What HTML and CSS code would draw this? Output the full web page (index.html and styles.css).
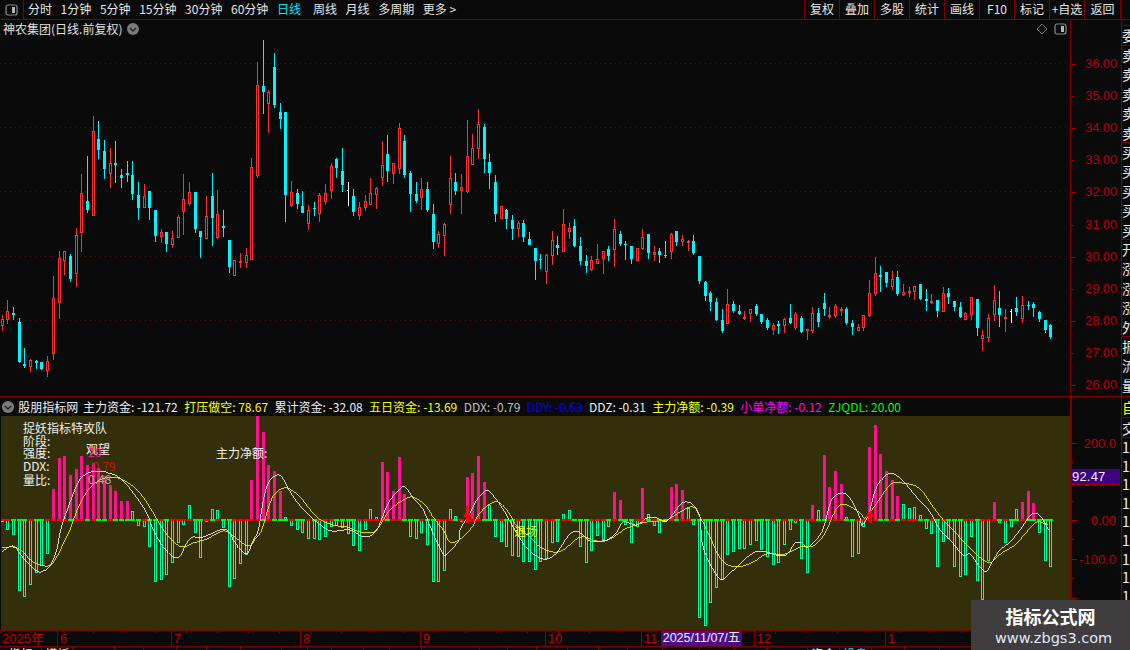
FILE: index.html
```html
<!DOCTYPE html>
<html lang="zh">
<head>
<meta charset="utf-8">
<title>神农集团 日线</title>
<link rel="stylesheet" href="styles.css">
</head>
<body>
<div class="app">
  <header class="toolbar">
    <div class="panel-btn">
      <svg class="panel-icon" viewBox="0 0 13 12"><rect x="1" y="1" width="11" height="10" rx="2" class="pi-frame"/><rect x="7" y="3" width="3" height="6" class="pi-fill"/></svg>
    </div>
    <nav class="periods">
      <span>分时</span><span>1分钟</span><span>5分钟</span><span>15分钟</span><span>30分钟</span><span>60分钟</span>
      <span class="active">日线</span><span class="after-active">周线</span><span>月线</span><span>多周期</span><span>更多 &gt;</span>
    </nav>
    <div class="tools">
      <span>复权</span><span>叠加</span><span>多股</span><span>统计</span><span>画线</span><span>F10</span><span>标记</span><span>+自选</span><span>返回</span>
    </div>
  </header>

  <section class="upper">
    <div class="chart">
      <svg id="price" class="plot" viewBox="0 20 1070 376"></svg>
      <div class="title">神农集团(日线.前复权)
        <svg class="chev" viewBox="0 0 12 12"><circle cx="6" cy="6" r="6" class="chev-bg"/><path d="M3 5l3 3 3-3" class="chev-mark"/></svg>
      </div>
      <div class="chart-icons">
        <svg class="diamond" viewBox="0 0 12 12"><path d="M6 1l5 5-5 5-5-5z"/></svg>
        <svg class="panel-icon" viewBox="0 0 13 12"><rect x="1" y="1" width="11" height="10" rx="2" class="pi-frame"/><rect x="7" y="3" width="3" height="6" class="pi-fill"/></svg>
      </div>
    </div>
    <div class="axis price-axis">
      <div class="tick long">36.00</div><div class="tick">35.00</div><div class="tick long">34.00</div>
      <div class="tick">33.00</div><div class="tick long">32.00</div><div class="tick">31.00</div>
      <div class="tick long">30.00</div><div class="tick">29.00</div><div class="tick long">28.00</div>
      <div class="tick">27.00</div><div class="tick long">26.00</div>
    </div>
    <aside class="side">
      <div class="group g-one"><div>委</div></div>
      <div class="group"><div>卖</div><div>卖</div><div>卖</div><div>卖</div><div>卖</div></div>
      <div class="group"><div>买</div><div>买</div><div>买</div><div>买</div><div>买</div></div>
      <div class="group"><div>开</div><div>涨</div><div>涨</div><div>涨</div><div>外</div></div>
      <div class="group g-last"><div>振</div><div>流</div><div>量</div></div>
    </aside>
  </section>

  <section class="lower">
    <div class="indicator">
      <div class="legend">
        <svg class="chev" viewBox="0 0 12 12"><circle cx="6" cy="6" r="6" class="chev-bg"/><path d="M3 5l3 3 3-3" class="chev-mark"/></svg>
        <span class="lg-name">股朋指标网</span>
        <span>主力资金: -121.72</span>
        <span class="yellow">打压做空: 78.67</span>
        <span>累计资金: -32.08</span>
        <span class="yellow">五日资金: -13.69</span>
        <span class="grey">DDX: -0.79</span>
        <span class="blue">DDY: -0.63</span>
        <span>DDZ: -0.31</span>
        <span class="yellow">主力净额: -0.39</span>
        <span class="magenta">小单净额: -0.12</span>
        <span class="green">ZJQDL: 20.00</span>
      </div>
      <div class="ind-plot">
        <svg id="flow" class="plot" viewBox="1 416 1069 214"></svg>
        <div class="notes">
          <div>捉妖指标特攻队</div>
          <div class="n-row">阶段:</div>
          <div class="n-row">强度:</div>
          <div class="n-row n-ddx">DDX:</div>
          <div class="n-row n-lb">量比:</div>
        </div>
        <span class="note n-watch">观望</span>
        <span class="note n-20">20</span>
        <span class="note n-m079">-0.79</span>
        <span class="note n-048">0.48</span>
        <span class="note n-net">主力净额:</span>
        <span class="note n-exit">退场</span>
      </div>
    </div>
    <div class="axis flow-axis">
      <div class="ftick long">200.0</div><div class="ftick"></div><div class="ftick long">100.0</div><div class="ftick"></div>
      <div class="ftick long">0.00</div><div class="ftick"></div><div class="ftick long">-100.0</div><div class="ftick"></div>
      <div class="ftick long"></div>
    </div>
    <aside class="side side-low">
      <div class="low-head yellow">自</div>
      <div class="low-head">交</div>
      <div class="low-nums"><div>1</div><div>1</div><div>1</div><div>1</div><div>1</div><div>1</div><div>1</div><div>1</div><div>1</div><div>1</div></div>
    </aside>
    <div class="value-tag">92.47</div>
  </section>

  <div id="dates" class="dates"></div>
  <div id="tabs" class="tabs"></div>

  <div class="date-tag">2025/11/07/五</div>
  <div class="watermark">
    <div class="wm-title">指标公式网</div>
    <div class="wm-url">www.zbgs3.com</div>
  </div>
</div>
<script src="chart.js"></script>
</body>
</html>
```

FILE: styles.css
```css
* { box-sizing: border-box; }
html, body { margin: 0; padding: 0; background: #0a0a0a; }
body { font-family: "Noto Sans CJK SC", "Liberation Sans", sans-serif; font-size: 12px; color: #e6e6e6; }

.app { position: relative; width: 1130px; height: 650px; overflow: hidden; display: flex; flex-direction: column; background: #0a0a0a; }

.toolbar { height: 20px; flex: none; display: flex; border-bottom: 1px solid #800000; line-height: 18px; }
.panel-btn { width: 24px; border-right: 1px solid #800000; display: flex; align-items: center; justify-content: center; }
.panel-icon { width: 13px; height: 12px; display: block; }
.pi-frame { fill: none; stroke: #8a8a8a; stroke-width: 1.2; }
.pi-fill { fill: #b5b5b5; }
.periods { display: flex; gap: 8.6px; padding-left: 4px; white-space: nowrap; }
.periods .active { color: #00e6ff; }
.periods .after-active { margin-left: 3.4px; }
.tools { margin-left: auto; display: flex; margin-right: 9px; }
.tools span { width: 35px; border-left: 1px solid #800000; text-align: center; white-space: nowrap; }
.tools span:last-child { width: 37px; border-right: 1px solid #800000; }

.upper { height: 377px; flex: none; display: flex; border-bottom: 1px solid #800000; }
.chart { position: relative; width: 1070px; flex: none; }
.plot { display: block; width: 100%; height: 100%; }
.title { position: absolute; left: 3px; top: 0; line-height: 18px; color: #e0e0e0; display: flex; align-items: center; gap: 5px; white-space: nowrap; }
.chev { width: 12px; height: 12px; flex: none; display: block; }
.chev-bg { fill: #7a7a7a; }
.chev-mark { fill: none; stroke: #222; stroke-width: 1.4; }
.chart-icons { position: absolute; right: 3px; top: 3px; display: flex; align-items: center; gap: 6px; }
.diamond { width: 12px; height: 12px; display: block; }
.diamond path { fill: none; stroke: #6e6e6e; }

.axis { width: 51px; flex: none; border-left: 1px solid #800000; color: #b80000; font-family: "Liberation Sans", sans-serif; }
.price-axis { padding-top: 27.6px; }
.tick { position: relative; height: 32.2px; line-height: 32.2px; padding-left: 14px; font-size: 13px; letter-spacing: -0.1px; }
.tick::before { content: ""; position: absolute; left: 0; top: 16px; width: 2px; height: 1px; background: #a00000; }
.tick.long::before { width: 5px; }

.side { flex: 1; min-width: 0; border-left: 1px solid #800000; overflow: hidden; padding-top: 5px; font-size: 14px; line-height: 19.4px; color: #e6e6e6; }
.group { border-top: 1px solid #800000; height: 97px; white-space: nowrap; }
.g-one { height: 20px; }
.g-last { height: 60px; }

.lower { position: relative; height: 233px; flex: none; display: flex; }
.indicator { width: 1070px; flex: none; display: flex; flex-direction: column; }
.legend { height: 19px; flex: none; display: flex; align-items: center; padding-left: 2px; gap: 6.4px; white-space: nowrap; line-height: 19px; color: #f0f0f0; }
.lg-name { margin-left: -2.2px; margin-right: -1.7px; }
.yellow { color: #ffff00; }
.grey { color: #c0c0c0; }
.blue { color: #0000ff; }
.magenta { color: #ff00ff; }
.green { color: #00ff00; }
.ind-plot { position: relative; height: 214px; flex: none; background: #322f0a; border-left: 1px solid #0a0a0a; }
.notes { position: absolute; left: 22px; top: 5px; color: #f0f0f0; line-height: 14px; }
.n-row { height: 12px; line-height: 12px; }
.n-ddx { height: 14px; margin-top: 1px; }
.n-lb { margin-top: 0; }
.note { position: absolute; white-space: nowrap; line-height: 14px; }
.n-watch { left: 85px; top: 26px; color: #f0f0f0; }
.n-20 { left: 87px; top: 29px; color: #ff1493; }
.n-m079 { left: 87px; top: 43px; color: #d01010; }
.n-048 { left: 87px; top: 56px; color: #aaaaaa; }
.n-net { left: 215px; top: 30px; color: #f0f0f0; }
.n-exit { left: 513px; top: 108px; color: #ffff00; }

.flow-axis { padding-top: 36.5px; border-left-width: 2px; }
.ftick { position: relative; height: 19.4px; line-height: 19.4px; padding-right: 5px; text-align: right; font-size: 13px; }
.ftick::before { content: ""; position: absolute; left: 0; top: 9px; width: 2px; height: 1px; background: #a00000; }
.ftick.long::before { width: 5px; }
.side-low { padding-top: 0; }
.low-head { border-bottom: 1px solid #800000; height: 20.5px; line-height: 20px; }
.low-nums div { height: 18.6px; line-height: 18.6px; color: #f0f0f0; }
.value-tag { position: absolute; left: 1072px; top: 72px; width: 48px; height: 16px; background: #3c0080; border-bottom: 1px solid #a00000; color: #f0f0f0; font-family: "Liberation Sans", sans-serif; font-size: 13px; line-height: 15px; letter-spacing: .2px; }

.dates { height: 17px; flex: none; display: flex; border-top: 1px solid #800000; border-bottom: 1px solid #800000; color: #c00000; font-family: "Liberation Sans", "Noto Sans CJK SC", sans-serif; font-size: 13px; line-height: 15px; background-image: repeating-linear-gradient(90deg, #800000 0 1px, transparent 1px 31px); background-size: 100% 2px; background-repeat: no-repeat; }
.month { padding-left: 2px; border-right: 1px solid #800000; white-space: nowrap; flex: none; }
.date-tag { position: absolute; left: 662px; top: 631px; width: 79px; height: 15px; background: #4a0f88; color: #f0f0f0; font-family: "Liberation Sans", "Noto Sans CJK SC", sans-serif; font-size: 12.5px; line-height: 15px; text-align: center; white-space: nowrap; box-shadow: 1px 0 0 #800000, -1px 0 0 #800000; }

.tabs { flex: 1; display: flex; overflow: hidden; font-size: 12px; line-height: 14px; color: #f0f0f0; }
.tab { flex: none; height: 14px; border-right: 1px solid #800000; text-align: center; white-space: nowrap; overflow: hidden; }
.tab-on { color: #00e6ff; }

.watermark { position: absolute; left: 971px; top: 600px; width: 159px; height: 50px; background: #403d3e; text-align: center; padding-top: 3px; }
.wm-title { font-family: "Noto Sans CJK SC", sans-serif; font-weight: 700; font-size: 18px; line-height: 26px; color: #ffffff; }
.wm-url { font-family: "DejaVu Sans", sans-serif; font-size: 14.5px; line-height: 18px; color: #dfe9ff; padding-left: 24px; text-align: left; white-space: nowrap; }
```

FILE: chart.js
```js
(function () {
  var NS = 'http://www.w3.org/2000/svg';
  var RED = '#ff3232', CYAN = '#00f5ff', WHITE = '#ffffff';

  function cx(i) { return Math.floor(2.33 + 5.667 * i); }

  function el(parent, tag, attrs) {
    var n = document.createElementNS(NS, tag);
    for (var k in attrs) n.setAttribute(k, attrs[k]);
    n.setAttribute('shape-rendering', attrs['shape-rendering'] || 'crispEdges');
    parent.appendChild(n);
    return n;
  }

  // each group: y offset of the source, then candles as colour,high,top,bottom,low (1/3 px)
  var groups = [
    [110, 'r615,628,647,663 r570,604,629,641 b591,608,615,630 b625,636,756,759 b714,762,768,774 r748,751,770,786 b751,753,760,777 b756,756,776,780 r738,754,782,801 r498,565,731,750 r423,445,578,627 r423,424,452,495 b432,438,507,516 r354,376,491,531 r192,250,368,426 b138,273,300,309 r18,64,317,317 b33,87,120,147 b90,123,177,207 r114,160,191,234 b93,159,165,219 b177,195,204,234 b153,189,195,216 b153,195,252,270 b216,255,294,330 r222,259,293,293 b243,243,294,330 b300,300,378,396 r357,367,381,399 b366,366,402,426 r363,385,404,414 r315,322,383,383 r192,268,305,375 r216,247,281,288 b246,246,357,369 b363,363,381,444 r258,319,386,386 b189,258,324,408 r240,313,384,387 b300,348,354,381 b390,390,471,489 r450,451,497,497 r429,454,458,474 r414,436,458,474 r144,172,449,449'],
    [0, 'r186,255,527,533 b120,258,276,342 r270,277,311,398 b160,201,315,323 b309,336,357,387 b336,336,585,666'],
    [100, 'r243,277,318,321 b267,279,312,327 b273,318,339,339 r315,331,372,390 b306,325,327,348 r280,286,342,366 r252,279,306,315 r189,198,273,297 b174,177,204,234 b144,213,255,276 w246,270,273,318 b267,288,336,348 r306,322,348,360 r285,304,324,333 r234,280,315,315 r261,265,285,327 r123,196,234,258 b105,162,213,246 r190,190,221,252 r69,85,206,222 b105,123,225,234 b213,219,282,336 b246,282,303,309 r234,268,294,330 b246,267,330,336 b312,342,426,447 r393,403,432,444 r369,372,408,468 r168,235,315,342 b219,246,273,285 r222,262,273,342 r60,169,276,279 r102,145,195,195 r27,73,147,177 b72,81,177,219 b162,186,219,267 b225,246,342,366 r319,319,358,358 b327,330,357,387 b345,360,387,420 r363,369,387,411 b360,369,411,426 b396,417,435,435 b444,444,483,540 b462,477,480,507 r462,465,516,552 r393,420,468,495 b408,435,444,465 r327,372,456,456 r369,384,396,417 b357,378,438,441'],
    [200, 'b111,138,183,195 b165,183,198,219 r168,180,210,212 r132,178,191,191 r153,154,177,222 b138,147,168,183 r57,88,150,201 b93,102,132,138 b123,132,135,180 b138,138,177,192 r143,145,183,183 r87,112,148,150 b102,102,159,177 r138,156,165,183 b144,153,165,189 b123,165,168,174 r100,102,156,177 b93,93,126,138 r105,117,125,138 r120,123,129,153 b105,123,159,165 b168,168,243,252 b243,246,288,303 b273,279,306,333 b294,306,361,363 b327,360,393,399 r267,313,372,372 b303,312,333,339 b315,333,342,345 r333,351,357,360 r327,328,342,366 b312,318,342,348 b342,342,366,372 b354,360,384,390 r369,376,389,405 b363,372,378,402 r354,358,377,399 b312,354,369,372 r336,343,384,390 b348,354,396,399 r387,388,392,420 r321,340,393,399 b324,339,366,381 b279,309,327,348 r321,345,347,357 r312,319,347,354 r321,327,333,348 b321,327,369,375 b360,369,381,405 r372,382,392,392 r346,346,384,393 r240,280,348,351 r171,220,282,288 b198,225,231,276 b216,216,249,261 r213,237,261,270 b213,231,282,288 r252,277,285,288 r262,274,279,291 r259,259,275,300 b252,252,297,300 b267,297,303,333 r282,304,310,312 b300,300,333,351 r262,279,336,336 b264,279,291,312 b303,303,321,333 b306,321,351,354 r336,339,360,360 r291,292,345,360 b297,297,384,408 r390,406,416,453 r342,355,414,426 r255,301,345,363 b273,324,345,381 r327,351,357,396 w327,333,336,369 b291,324,336,348 r288,316,357,369 b303,315,318,330 b306,312,324,351 b333,336,357,366 b360,360,390,399 b372,375,411,417']
  ];

  var candles = [];
  groups.forEach(function (g) {
    g[1].split(' ').forEach(function (s) {
      var v = s.slice(1).split(',').map(function (n) { return Math.round(g[0] + Number(n) / 3); });
      candles.push({ c: s[0], h: v[0], t: v[1], b: v[2], l: v[3] });
    });
  });

  var price = document.getElementById('price');
  [63, 127, 191, 256, 320].forEach(function (y) {
    el(price, 'line', { x1: 0, x2: 1070, y1: y + 0.5, y2: y + 0.5, stroke: '#550808', 'stroke-dasharray': '1 4' });
  });

  candles.forEach(function (d, i) {
    var x = cx(i);
    var col = d.c === 'r' ? RED : d.c === 'w' ? WHITE : CYAN;
    el(price, 'rect', { x: x, y: d.h, width: 1, height: Math.max(d.l - d.h, 1), fill: col });
    if (d.c === 'r') {
      el(price, 'rect', { x: x - 0.5, y: d.t + 0.5, width: 2, height: Math.max(d.b - d.t - 1, 1), fill: '#0a0a0a', stroke: col });
    } else if (d.c === 'w') {
      el(price, 'rect', { x: x - 1, y: d.t, width: 1, height: 1, fill: col });
    } else {
      el(price, 'rect', { x: x - 1, y: d.t, width: 3, height: Math.max(d.b - d.t, 1), fill: col });
    }
  });

  // indicator columns: y of the free end of each bar
  var bars = [522,530,535,591,597,585,573,566,554,489,458,456,475,469,456,465,463,468,476,485,491,501,501,511,526,527,547,582,580,575,563,543,525,505,533,558,521,509,510,528,587,579,564,555,480,416,432,465,471,491,517,526,530,533,539,539,540,537,527,526,528,534,546,551,530,509,517,462,472,491,457,494,537,539,533,545,582,582,571,509,516,522,477,473,456,482,505,537,542,547,556,557,562,562,570,562,559,543,542,514,510,519,547,563,551,536,540,527,492,500,525,543,527,488,514,526,533,521,487,484,490,508,525,618,626,603,588,580,555,552,549,549,545,541,550,557,565,563,545,530,523,559,573,505,510,455,487,471,484,517,557,554,527,447,425,454,471,480,496,504,508,507,515,529,534,567,542,539,567,577,575,537,581,600,561,502,523,543,527,509,502,491,503,533,561,567];
  var pink = {};
  [[9,22],[44,49],[67,71],[82,85],[108,109],[113,113],[118,120],[143,143],[145,148],[153,158],[175,175],[180,182]].forEach(function (r) {
    for (var i = r[0]; i <= r[1]; i++) pink[i] = true;
  });

  var flow = document.getElementById('flow');
  var ZERO = 520;
  bars.forEach(function (y, i) {
    var x = cx(i);
    if (pink[i]) {
      el(flow, 'rect', { x: x - 1, y: y, width: 3, height: ZERO - y, fill: '#ff1090' });
    } else {
      var top = Math.min(y, ZERO), bot = Math.max(y, ZERO);
      el(flow, 'rect', { x: x - 0.5, y: top + 0.5, width: 2, height: Math.max(bot - top - 1, 1), fill: 'none', stroke: '#00ffa0' });
    }
  });
  bars.forEach(function (y, i) {
    var col = candles[i] && candles[i].c === 'r' ? '#ff0000' : '#00ff00';
    el(flow, 'rect', { x: cx(i) - 2, y: ZERO - 1, width: 5, height: 2, fill: col });
  });

  function smooth(pts) {
    var d = 'M' + pts[0][0] + ' ' + pts[0][1];
    for (var i = 0; i < pts.length - 1; i++) {
      var p0 = pts[i - 1] || pts[i], p1 = pts[i], p2 = pts[i + 1], p3 = pts[i + 2] || p2;
      d += 'C' + (p1[0] + (p2[0] - p0[0]) / 6).toFixed(1) + ' ' + (p1[1] + (p2[1] - p0[1]) / 6).toFixed(1) +
        ' ' + (p2[0] - (p3[0] - p1[0]) / 6).toFixed(1) + ' ' + (p2[1] - (p3[1] - p1[1]) / 6).toFixed(1) +
        ' ' + p2[0] + ' ' + p2[1];
    }
    return d;
  }

  function line(segments, colour) {
    var pts = [];
    segments.forEach(function (s) {
      for (var i = 0; i < s[1].length; i += 2) pts.push([s[0] + s[1][i] / 3, s[1][i + 1]]);
    });
    el(flow, 'path', { d: smooth(pts), fill: 'none', stroke: colour, 'stroke-width': 0.8 });
  }

  line([
    [0, [5,552,40,546,70,558,110,571,130,571,150,566,170,550,182,530,205,507,235,482,265,473,300,471,325,473,360,478,400,493,440,513,460,530,490,547,520,557,540,556,560,543,580,537,600,538,625,535,660,530,685,531,710,545,740,554,760,540,775,530,790,500,805,483,825,476,845,477,880,497,920,513,950,522,985,530,1010,531,1050,530,1095,537,1130,530,1165,503,1200,489,1215,487,1245,500,1270,510,1295,530,1330,554,1350,551,1377,540]],
    [460, [0,530,30,513,50,500,75,491,90,492,125,507,165,530,200,548,235,557,260,559,290,553,320,538,345,531,370,535,390,541,440,540,470,532,490,522,530,525,560,518,590,518,620,521,660,505,680,502,700,505,720,517,725,540,740,557,760,570,785,580,810,573,835,566,870,555,905,551,960,556,985,553,1005,543,1025,543,1045,547,1080,535,1095,523,1115,500,1145,493,1170,498,1200,518,1205,525,1225,515,1250,487,1285,474,1320,478,1377,500]],
    [920, [30,512,60,530,90,540,130,555,150,554,180,567,200,571,220,560,240,550,270,542,300,530,325,518,345,513,365,518,385,530]]
  ], '#ffffff');

  line([
    [0, [5,548,40,547,65,551,100,562,145,566,170,557,195,540,210,530,235,507,265,490,300,480,340,477,380,482,420,493,460,513,490,530,525,543,550,547,580,543,620,539,670,531,700,536,745,546,770,537,785,530,810,503,830,492,860,488,900,497,950,517,1000,525,1040,527,1070,531,1100,533,1130,530,1165,512,1200,502,1235,497,1275,505,1310,522,1330,530,1350,542,1377,540]],
    [460, [30,530,55,515,85,505,115,502,145,512,170,526,210,537,240,547,280,552,310,550,350,539,375,537,410,541,445,540,490,530,500,528,560,522,620,520,660,512,700,507,725,520,740,530,750,537,785,560,830,567,880,562,920,554,975,554,1020,547,1060,546,1085,538,1100,530,1130,508,1160,505,1200,513,1215,518,1240,508,1290,485,1325,483,1377,488]],
    [920, [40,507,70,520,100,530,140,545,190,560,215,562,245,553,285,545,320,532,350,522,385,525]]
  ], '#ffff00');

  // entry markers
  [[467, true], [870, false]].forEach(function (m) {
    var x = m[0] + 0.5;
    el(flow, 'path', { d: 'M' + x + ' 510l4.5 7h-3v6h-3v-6h-3z', fill: '#ff0000', 'shape-rendering': 'auto' });
    if (m[1]) el(flow, 'circle', { cx: x, cy: 508, r: 2, fill: '#ff0000', 'shape-rendering': 'auto' });
  });

  // date axis
  var stops = [[58, '2025年'], [171.7, '6'], [301, '7'], [420.7, '8'], [545.7, '9'], [641.7, '10'], [754.7, '11'], [885.7, '12'], [1130, '1']];
  var dates = document.getElementById('dates'), prev = 0;
  stops.forEach(function (s) {
    var m = document.createElement('div');
    m.className = 'month';
    m.style.width = (s[0] - prev) + 'px';
    m.textContent = s[1];
    dates.appendChild(m);
    prev = s[0];
  });

  // bottom tab strip, only its top edge is in view
  var edges = [42.3,73.3,115,144,177.3,207.3,241,282.3,308.3,332.3,364,390,422.3,480,508.3,536.7,568.3,599.3,628.3,663.3,700,735,766.7,807.7,840,871.7,905,940];
  var labels = { 0: '指标', 1: '模板', 24: '资金', 25: '操盘' };
  var tabs = document.getElementById('tabs'); prev = 0;
  edges.forEach(function (x, i) {
    var t = document.createElement('div');
    t.className = i === 25 ? 'tab tab-on' : 'tab';
    t.style.width = (x - prev) + 'px';
    t.textContent = labels[i] || '';
    tabs.appendChild(t);
    prev = x;
  });
})();
```
